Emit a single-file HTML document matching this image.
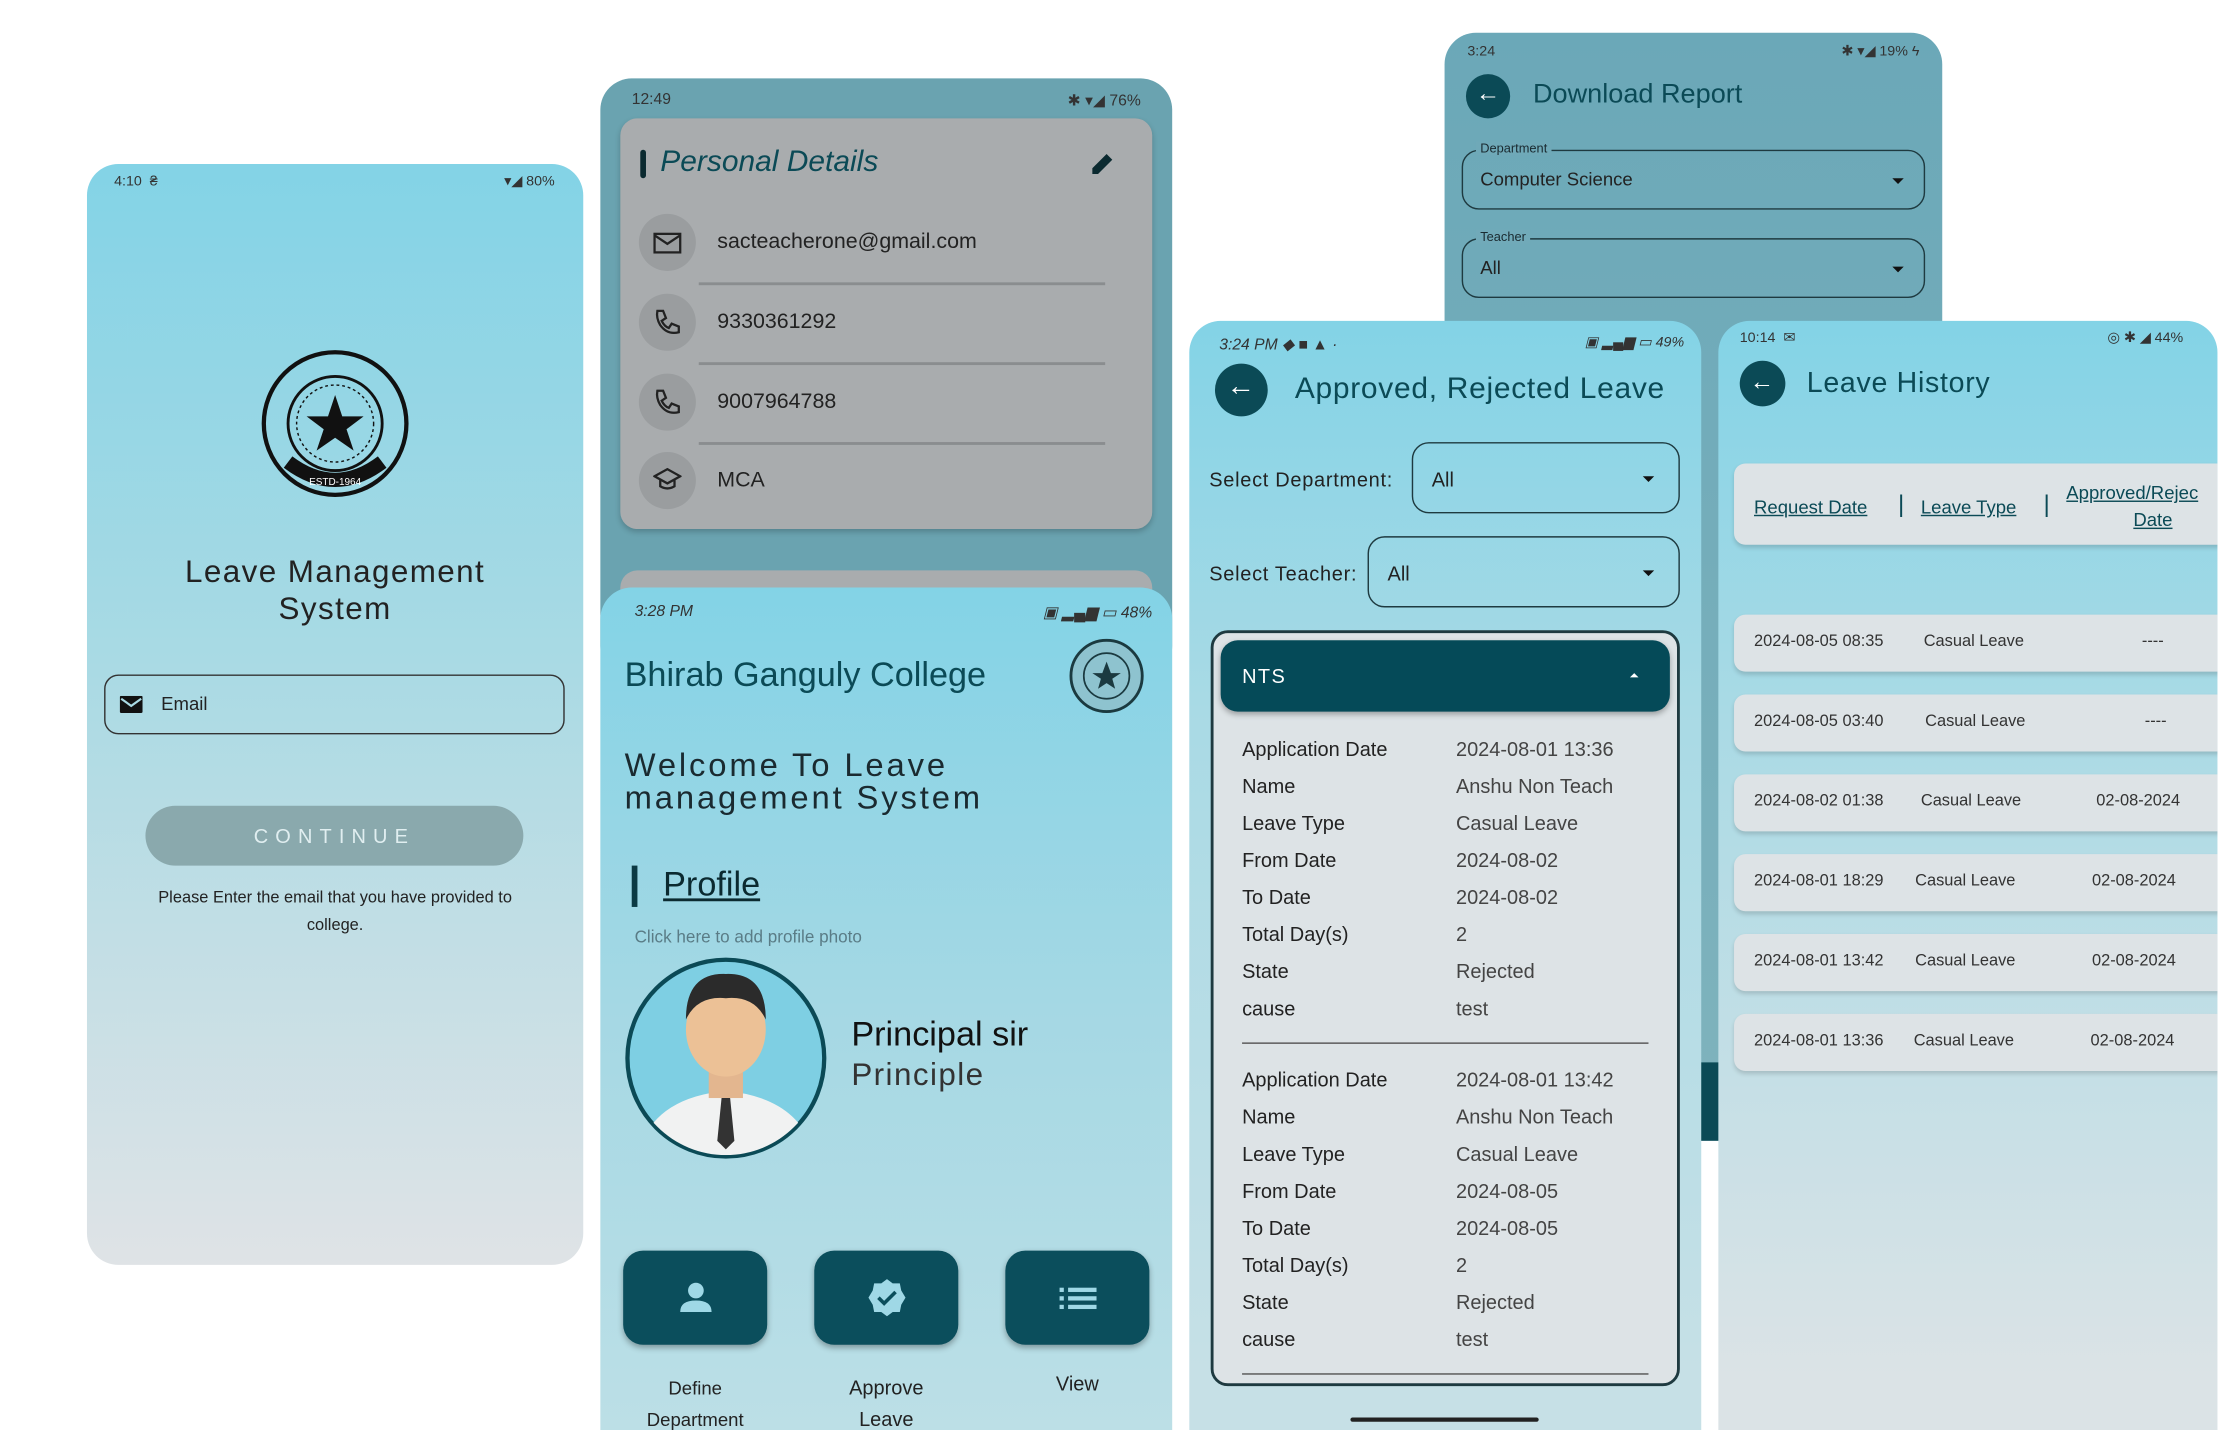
<!DOCTYPE html>
<html><head><meta charset="utf-8"><style>
*{box-sizing:border-box;margin:0;padding:0}
html,body{width:2236px;height:1430px;overflow:hidden}
body{background:#fff;font-family:"Liberation Sans",sans-serif;color:#222}
#o{position:absolute;left:0;top:0;width:2236px;height:1430px;overflow:hidden}
#w{position:absolute;left:0;top:0;width:1568px;height:1003px;overflow:hidden;transform:scale(1.42602);transform-origin:0 0}
.a{position:absolute}
.ph{position:absolute;overflow:hidden;border-radius:22px}
.cut{border-radius:22px 22px 0 0}
.t{position:absolute;white-space:nowrap}
.st{font-size:10px;color:#333}
.circ{position:absolute;border-radius:50%}
.dd{position:absolute;border:1.5px solid #1e3a40;border-radius:12px}
.caret{position:absolute;width:0;height:0;border-left:4px solid transparent;border-right:4px solid transparent;border-top:4px solid #111}
.row{position:absolute;left:11px;right:-20px;height:40px;background:#dde3e6;border-radius:8px;box-shadow:0 2px 3px rgba(0,0,0,.15);font-size:11.5px;color:#333}
.row span{position:absolute;top:13px}
.lbl{position:absolute;font-size:14px;color:#222}
</style></head><body><div id="o"><div id="w">

<!-- Phone 1 -->
<div class="ph" style="left:61px;top:115px;width:348px;height:772px;background:linear-gradient(#83d3e6,#a9dae4 45%,#dfe3e6)">
 <div class="t st" style="left:19px;top:7px">4:10 &nbsp;₴</div>
 <div class="t st" style="right:20px;top:7px">▾◢ 80%</div>
 <svg class="a" style="left:121px;top:129px" width="106" height="106" viewBox="0 0 106 106"><circle cx="53" cy="53" r="50" fill="none" stroke="#111" stroke-width="3"/><circle cx="53" cy="53" r="33" fill="none" stroke="#111" stroke-width="2"/><circle cx="53" cy="53" r="27" fill="none" stroke="#111" stroke-width="1" stroke-dasharray="2 2"/><path d="M53 33 L58 48 L73 48 L61 57 L66 72 L53 63 L40 72 L45 57 L33 48 L48 48Z" fill="#111"/><path d="M20 80 Q53 105 86 80" stroke="#111" stroke-width="10" fill="none"/><text x="53" y="96" font-size="7" fill="#fff" text-anchor="middle">ESTD-1964</text></svg>
 <div class="t" style="left:0;width:348px;text-align:center;top:273px;font-size:22px;line-height:26px;letter-spacing:1px;white-space:normal">Leave Management<br>System</div>
 <div class="a" style="left:12px;top:358px;width:323px;height:42px;border:1.5px solid #333;border-radius:10px"></div>
 <svg class="a" style="left:23px;top:373px" width="16" height="12"><rect width="16" height="12" rx="1" fill="#111"/><path d="M1 2 L8 7 L15 2" stroke="#a9dae4" stroke-width="1.5" fill="none"/></svg>
 <div class="t" style="left:52px;top:371px;font-size:13px">Email</div>
 <div class="a" style="left:41px;top:450px;width:265px;height:42px;background:#8aa9ad;border-radius:21px;color:#e0eef0;font-size:14px;letter-spacing:5px;text-align:center;line-height:42px">CONTINUE</div>
 <div class="t" style="left:0;width:348px;text-align:center;top:506px;font-size:11.5px;line-height:19px;white-space:normal;padding:0 32px">Please Enter the email that you have provided to college.</div>
</div>

<!-- Phone 2 back -->
<div class="ph" style="left:421px;top:55px;width:401px;height:420px;background:#6aa3b0">
 <div class="t st" style="left:22px;top:9px;font-size:11px">12:49</div>
 <div class="t st" style="right:22px;top:9px;font-size:11px">✱ ▾◢ 76%</div>
 <div class="a" style="left:14px;top:28px;width:373px;height:288px;background:#a9acae;border-radius:12px;box-shadow:0 2px 4px rgba(0,0,0,.2)"></div>
 <div class="a" style="left:28px;top:50px;width:4px;height:20px;background:#0b2a30;border-radius:2px"></div>
 <div class="t" style="left:42px;top:47px;font-size:21px;font-style:italic;color:#0b4a56">Personal Details</div>
 <svg class="a" style="left:343px;top:51px" width="18" height="18"><path d="M2 16 L2 12 L12 2 L16 6 L6 16Z" fill="#0b2a30"/></svg>
 <div class="circ" style="left:27px;top:95px;width:40px;height:40px;background:#9a9d9f"></div>
 <div class="circ" style="left:27px;top:151px;width:40px;height:40px;background:#9a9d9f"></div>
 <div class="circ" style="left:27px;top:207px;width:40px;height:40px;background:#9a9d9f"></div>
 <div class="circ" style="left:27px;top:262px;width:40px;height:40px;background:#9a9d9f"></div>
 <svg class="a" style="left:37px;top:108px" width="20" height="15"><rect x="1" y="1" width="18" height="13" fill="none" stroke="#222" stroke-width="1.6"/><path d="M1 2 L10 8 L19 2" stroke="#222" stroke-width="1.6" fill="none"/></svg>
 <svg class="a" style="left:37px;top:161px" width="20" height="20"><path d="M3 2 L7 2 L9 7 L6 9 Q8 13 11 14 L13 11 L18 13 L18 17 Q10 19 5 12 Q2 7 3 2Z" fill="none" stroke="#222" stroke-width="1.6"/></svg>
 <svg class="a" style="left:37px;top:217px" width="20" height="20"><path d="M3 2 L7 2 L9 7 L6 9 Q8 13 11 14 L13 11 L18 13 L18 17 Q10 19 5 12 Q2 7 3 2Z" fill="none" stroke="#222" stroke-width="1.6"/></svg>
 <svg class="a" style="left:37px;top:273px" width="20" height="16"><path d="M1 6 L10 1 L19 6 L10 11Z M5 8 V13 Q10 16 15 13 V8" stroke="#222" stroke-width="1.6" fill="none"/></svg>
 <div class="t" style="left:82px;top:106px;font-size:15px">sacteacherone@gmail.com</div>
 <div class="t" style="left:82px;top:162px;font-size:15px">9330361292</div>
 <div class="t" style="left:82px;top:218px;font-size:15px">9007964788</div>
 <div class="t" style="left:82px;top:273px;font-size:15px">MCA</div>
 <div class="a" style="left:69px;top:143px;width:285px;height:1.5px;background:#8a8d8f"></div>
 <div class="a" style="left:69px;top:199px;width:285px;height:1.5px;background:#8a8d8f"></div>
 <div class="a" style="left:69px;top:255px;width:285px;height:1.5px;background:#8a8d8f"></div>
 <div class="a" style="left:14px;top:345px;width:373px;height:40px;background:#a9acae;border-radius:12px"></div>
</div>

<!-- Phone 2 front -->
<div class="ph cut" style="left:421px;top:412px;width:401px;height:591px;background:linear-gradient(#83d3e6,#a5d8e4 50%,#bcdfe6)">
 <div class="t st" style="left:24px;top:11px;font-style:italic;font-size:11px">3:28 PM</div>
 <div class="t st" style="right:14px;top:11px;font-style:italic;font-size:11px">▣ ▂▄▆ ▭ 48%</div>
 <div class="t" style="left:17px;top:48px;font-size:24px;color:#0b4a56">Bhirab Ganguly College</div>
 <svg class="a" style="left:328px;top:35px" width="54" height="54" viewBox="0 0 54 54"><circle cx="27" cy="27" r="25" fill="#8ec3cf" stroke="#1b3a40" stroke-width="2"/><circle cx="27" cy="27" r="16" fill="none" stroke="#1b3a40" stroke-width="1.2"/><path d="M27 17 L30 25 L37 25 L31 29 L33 36 L27 32 L21 36 L23 29 L17 25 L24 25Z" fill="#1b3a40"/></svg>
 <div class="t" style="left:17px;top:113px;font-size:23px;line-height:23px;letter-spacing:2px;color:#1a2a30">Welcome To Leave<br>management System</div>
 <div class="a" style="left:22px;top:195px;width:4px;height:29px;background:#0b3a44"></div>
 <div class="t" style="left:44px;top:195px;font-size:24px;text-decoration:underline;color:#0b2a30">Profile</div>
 <div class="t" style="left:24px;top:238px;font-size:12px;color:#5a7c86">Click here to add profile photo</div>
 <svg class="a" style="left:16px;top:258px" width="144" height="144" viewBox="0 0 144 144"><defs><clipPath id="cp"><circle cx="72" cy="72" r="68"/></clipPath></defs><circle cx="72" cy="72" r="69" fill="#7ecfe3" stroke="#0b4a56" stroke-width="3"/><g clip-path="url(#cp)"><path d="M10 140 Q20 100 72 95 Q124 100 134 140Z" fill="#f1f2f2"/><rect x="60" y="70" width="24" height="30" fill="#e3b68f"/><ellipse cx="72" cy="52" rx="28" ry="33" fill="#ecc196"/><path d="M44 45 Q44 12 72 13 Q100 12 100 45 Q92 28 72 30 Q52 28 44 45Z" fill="#2b2b2b"/><path d="M69 100 L75 100 L78 130 L72 136 L66 130Z" fill="#333"/></g></svg>
 <div class="t" style="left:176px;top:300px;font-size:24px;color:#111">Principal sir</div>
 <div class="t" style="left:176px;top:329px;font-size:22px;color:#333;letter-spacing:1px">Principle</div>
 <div class="a" style="left:16px;top:465px;width:101px;height:66px;background:#0b4e5c;border-radius:14px;box-shadow:0 2px 4px rgba(0,0,0,.3)"></div>
 <div class="a" style="left:150px;top:465px;width:101px;height:66px;background:#0b4e5c;border-radius:14px;box-shadow:0 2px 4px rgba(0,0,0,.3)"></div>
 <div class="a" style="left:284px;top:465px;width:101px;height:66px;background:#0b4e5c;border-radius:14px;box-shadow:0 2px 4px rgba(0,0,0,.3)"></div>
 <svg class="a" style="left:55px;top:486px" width="24" height="24"><circle cx="12" cy="7" r="5.5" fill="#9fd8e6"/><path d="M1 22 Q1 14 12 14 Q23 14 23 22Z" fill="#9fd8e6"/></svg>
 <svg class="a" style="left:187px;top:484px" width="28" height="28"><path d="M14 1 L18 4 L23 4 L24 9 L27 14 L24 19 L23 24 L18 24 L14 27 L10 24 L5 24 L4 19 L1 14 L4 9 L5 4 L10 4Z" fill="#9fd8e6"/><path d="M8 14 L12 18 L20 10" stroke="#0b4e5c" stroke-width="2.5" fill="none"/></svg>
 <svg class="a" style="left:322px;top:490px" width="26" height="16"><g fill="#9fd8e6"><rect x="0" y="1" width="3" height="3"/><rect x="6" y="1" width="20" height="3"/><rect x="0" y="7" width="3" height="3"/><rect x="6" y="7" width="20" height="3"/><rect x="0" y="13" width="3" height="3"/><rect x="6" y="13" width="20" height="3"/></g></svg>
 <div class="t" style="left:16px;width:101px;text-align:center;top:551px;font-size:13px;line-height:22px">Define<br>Department</div>
 <div class="t" style="left:150px;width:101px;text-align:center;top:550px;font-size:14px;line-height:22px">Approve<br>Leave</div>
 <div class="t" style="left:284px;width:101px;text-align:center;top:550px;font-size:14px">View</div>
</div>

<!-- Phone 3 back -->
<div class="ph" style="left:1013px;top:23px;width:349px;height:777px;background:linear-gradient(#6ba8b8,#7fb3bd)">
 <div class="t st" style="left:16px;top:8px">3:24</div>
 <div class="t st" style="right:16px;top:8px">✱ ▾◢ 19% ϟ</div>
 <div class="circ" style="left:15px;top:29px;width:31px;height:31px;background:#0b4a56"></div>
 <div class="t" style="left:22px;top:33px;font-size:17px;color:#fff">←</div>
 <div class="t" style="left:62px;top:33px;font-size:19px;color:#0b4a56">Download Report</div>
 <div class="dd" style="left:12px;top:82px;width:325px;height:42px"></div>
 <div class="t" style="left:22px;top:76px;font-size:9px;background:#6fa9b8;padding:0 3px;color:#1a2a30">Department</div>
 <div class="t" style="left:25px;top:95px;font-size:13px">Computer Science</div>
 <div class="caret" style="left:314px;top:102px"></div>
 <div class="dd" style="left:12px;top:144px;width:325px;height:42px"></div>
 <div class="t" style="left:22px;top:138px;font-size:9px;background:#71aab9;padding:0 3px;color:#1a2a30">Teacher</div>
 <div class="t" style="left:25px;top:157px;font-size:13px">All</div>
 <div class="caret" style="left:314px;top:164px"></div>
 <div class="a" style="left:0;top:722px;width:349px;height:55px;background:#0b4a56"></div>
</div>

<!-- Phone 4 -->
<div class="ph cut" style="left:834px;top:225px;width:359px;height:778px;background:linear-gradient(#83d3e6,#a9dae5 35%,#c6e0e6 95%)">
 <div class="t st" style="left:21px;top:10px;font-style:italic;font-size:11px">3:24 PM ◆ ■ ▲ ·</div>
 <div class="t st" style="right:12px;top:10px;font-style:italic;font-size:10px">▣ ▂▄▆ ▭ 49%</div>
 <div class="circ" style="left:18px;top:30px;width:37px;height:37px;background:#0b4a56"></div>
 <div class="t" style="left:26px;top:35px;font-size:20px;color:#fff">←</div>
 <div class="t" style="left:74px;top:36px;font-size:21px;color:#0b4a56;letter-spacing:.5px">Approved, Rejected Leave</div>
 <div class="t" style="left:14px;top:103px;font-size:14px;letter-spacing:.5px">Select Department:</div>
 <div class="dd" style="left:156px;top:85px;width:188px;height:50px"></div>
 <div class="t" style="left:170px;top:103px;font-size:14px">All</div>
 <div class="caret" style="left:318px;top:109px"></div>
 <div class="t" style="left:14px;top:169px;font-size:14px;letter-spacing:.5px">Select Teacher:</div>
 <div class="dd" style="left:125px;top:151px;width:219px;height:50px"></div>
 <div class="t" style="left:139px;top:169px;font-size:14px">All</div>
 <div class="caret" style="left:318px;top:175px"></div>
 <div class="a" style="left:15px;top:217px;width:329px;height:530px;border:2px solid #1e3a40;border-radius:12px;background:#dde3e6;overflow:hidden">
  <div class="a" style="left:5px;top:5px;width:315px;height:50px;background:#054a58;border-radius:12px;box-shadow:0 2px 4px rgba(0,0,0,.3)"></div>
  <div class="t" style="left:20px;top:22px;font-size:14px;color:#fff;letter-spacing:1px">NTS</div>
  <div class="a" style="left:292px;top:28px;width:0;height:0;border-left:3px solid transparent;border-right:3px solid transparent;border-bottom:3px solid #fff"></div>
  <div class="lbl" style="left:20px;top:68px;line-height:26px">Application Date<br>Name<br>Leave Type<br>From Date<br>To Date<br>Total Day(s)<br>State<br>cause</div>
  <div class="lbl" style="left:170px;top:68px;line-height:26px;color:#444">2024-08-01 13:36<br>Anshu Non Teach<br>Casual Leave<br>2024-08-02<br>2024-08-02<br>2<br>Rejected<br>test</div>
  <div class="a" style="left:20px;top:287px;width:285px;height:1px;background:#555"></div>
  <div class="lbl" style="left:20px;top:300px;line-height:26px">Application Date<br>Name<br>Leave Type<br>From Date<br>To Date<br>Total Day(s)<br>State<br>cause</div>
  <div class="lbl" style="left:170px;top:300px;line-height:26px;color:#444">2024-08-01 13:42<br>Anshu Non Teach<br>Casual Leave<br>2024-08-05<br>2024-08-05<br>2<br>Rejected<br>test</div>
  <div class="a" style="left:20px;top:519px;width:285px;height:1px;background:#555"></div>
 </div>
 <div class="a" style="left:113px;top:769px;width:132px;height:3px;background:#222;border-radius:2px"></div>
</div>

<!-- Phone 5 -->
<div class="ph cut" style="left:1205px;top:225px;width:350px;height:778px;background:linear-gradient(#83d3e6,#a9dae5 35%,#dbe3e6 95%)">
 <div class="t st" style="left:15px;top:7px">10:14 &nbsp;✉</div>
 <div class="t st" style="right:24px;top:7px">◎ ✱ ◢ 44%</div>
 <div class="circ" style="left:15px;top:28px;width:32px;height:32px;background:#0b4a56"></div>
 <div class="t" style="left:22px;top:33px;font-size:17px;color:#fff">←</div>
 <div class="t" style="left:62px;top:33px;font-size:20px;color:#0b4a56;letter-spacing:.5px">Leave History</div>
 <div class="a" style="left:11px;top:100px;width:360px;height:57px;background:#dde3e6;border-radius:8px;box-shadow:0 2px 3px rgba(0,0,0,.15);font-size:13px;color:#0b4a56">
  <span class="t" style="left:14px;top:23px;text-decoration:underline">Request Date</span>
  <span class="t" style="left:115px;top:19px;font-size:17px">|</span>
  <span class="t" style="left:131px;top:23px;text-decoration:underline">Leave Type</span>
  <span class="t" style="left:217px;top:19px;font-size:17px">|</span>
  <span class="t" style="left:233px;top:13px;text-decoration:underline">Approved/Rejec</span>
  <span class="t" style="left:280px;top:32px;text-decoration:underline">Date</span>
 </div>
 <div class="row" style="top:206px"><span style="left:14px">2024-08-05 08:35</span><span style="left:133px">Casual Leave</span><span style="left:286px">----</span></div>
 <div class="row" style="top:262px"><span style="left:14px">2024-08-05 03:40</span><span style="left:134px">Casual Leave</span><span style="left:288px">----</span></div>
 <div class="row" style="top:318px"><span style="left:14px">2024-08-02 01:38</span><span style="left:131px">Casual Leave</span><span style="left:254px">02-08-2024</span></div>
 <div class="row" style="top:374px"><span style="left:14px">2024-08-01 18:29</span><span style="left:127px">Casual Leave</span><span style="left:251px">02-08-2024</span></div>
 <div class="row" style="top:430px"><span style="left:14px">2024-08-01 13:42</span><span style="left:127px">Casual Leave</span><span style="left:251px">02-08-2024</span></div>
 <div class="row" style="top:486px"><span style="left:14px">2024-08-01 13:36</span><span style="left:126px">Casual Leave</span><span style="left:250px">02-08-2024</span></div>
</div>

</div></div></body></html>
